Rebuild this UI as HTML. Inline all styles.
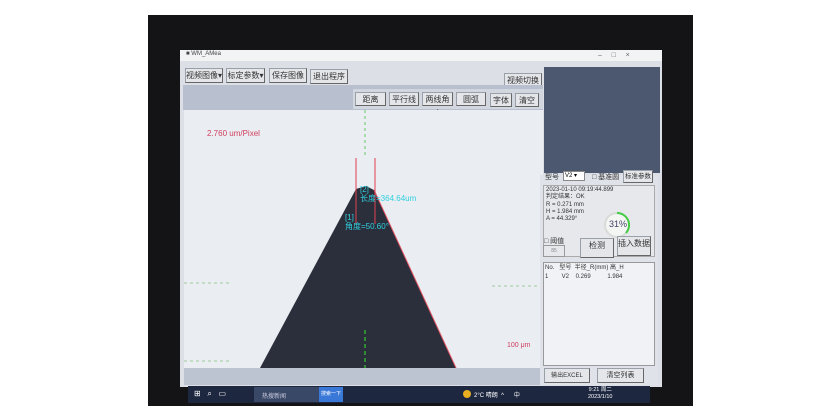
<!DOCTYPE html>
<html><head><meta charset="utf-8"><style>
*{margin:0;padding:0;box-sizing:border-box}
body{width:840px;height:420px;background:#fff;position:relative;overflow:hidden;font-family:"Liberation Sans","Noto Sans CJK SC",sans-serif}
.a{position:absolute}
.btn{position:absolute;background:#e4e6ea;border:1px solid #9aa0a8;border-right-color:#666;border-bottom-color:#666;font-size:8px;color:#333;text-align:center;line-height:14px}
.t{position:absolute;font-size:6px;color:#333;white-space:nowrap}
</style></head><body>
<div class="a" style="left:148px;top:15px;width:545px;height:391px;background:#141416"></div>
<div class="a" style="left:180px;top:50px;width:482px;height:337px;background:#dcdfe6"></div>
<div class="a" style="left:180px;top:50px;width:482px;height:11px;background:#f2f3f5"></div>
<div class="t" style="left:186px;top:51px;color:#444">■ WM_AMea</div>
<div class="t" style="left:598px;top:52px;font-size:7px;color:#666">–&nbsp;&nbsp;&nbsp;&nbsp;&nbsp;□&nbsp;&nbsp;&nbsp;&nbsp;&nbsp;×</div>
<div class="btn" style="left:185px;top:68px;width:38px;height:15px">视频图像▾</div>
<div class="btn" style="left:226px;top:68px;width:39px;height:15px">标定参数▾</div>
<div class="btn" style="left:269px;top:68px;width:38px;height:15px">保存图像</div>
<div class="btn" style="left:310px;top:69px;width:38px;height:15px">退出程序</div>
<div class="btn" style="left:504px;top:73px;width:38px;height:15px">视频切换</div>
<div class="a" style="left:183px;top:85px;width:360px;height:25px;background:#b8c0cf"></div>
<div class="a" style="left:353px;top:89px;width:190px;height:20px;background:#d2d6de"></div>
<div class="btn" style="left:355px;top:92px;width:31px;height:14px">距离</div>
<div class="btn" style="left:389px;top:92px;width:30px;height:14px">平行线</div>
<div class="btn" style="left:422px;top:92px;width:31px;height:14px">两线角度</div>
<div class="btn" style="left:456px;top:92px;width:30px;height:14px">圆弧</div>
<div class="btn" style="left:490px;top:93px;width:22px;height:14px">字体</div>
<div class="btn" style="left:515px;top:93px;width:24px;height:14px">清空</div>
<div class="a" style="left:184px;top:110px;width:359px;height:258px;background:#eaedf1"></div>
<svg class="a" style="left:184px;top:110px" width="359" height="258">
<polygon points="76,258 172,79 182,76 190,80 272,258" fill="#2a2f3b"/>
<line x1="190" y1="80" x2="272" y2="258" stroke="#e05060" stroke-width="1"/>
<line x1="172" y1="48" x2="172" y2="114" stroke="#e04050"/>
<line x1="191" y1="48" x2="191" y2="114" stroke="#e04050"/>
<line x1="181" y1="0" x2="181" y2="45" stroke="#6c6" stroke-dasharray="3,3"/>
<line x1="181" y1="220" x2="181" y2="258" stroke="#3a3" stroke-width="1.5" stroke-dasharray="4,3"/>
<line x1="0" y1="173" x2="45" y2="173" stroke="#9c9" stroke-dasharray="3,3"/>
<line x1="0" y1="251" x2="45" y2="251" stroke="#9c9" stroke-dasharray="3,3"/>
<line x1="308" y1="176" x2="355" y2="176" stroke="#9c9" stroke-dasharray="3,3"/>
</svg>
<div class="t" style="left:207px;top:129px;font-size:8px;color:#d04060">2.760 um/Pixel</div>
<div class="t" style="left:360px;top:185px;font-size:8px;color:#30d0e0;line-height:9px">[2]<br>长度=364.64um</div>
<div class="t" style="left:345px;top:213px;font-size:8px;color:#30d0e0;line-height:9px">[1]<br>角度=50.60°</div>
<div class="t" style="left:507px;top:342px;font-size:7px;color:#d04060">100 μm</div>
<div class="a" style="left:184px;top:368px;width:356px;height:17px;background:#bcc4d2"></div>
<div class="a" style="left:544px;top:67px;width:116px;height:106px;background:#4c5870"></div>
<div class="a" style="left:540px;top:175px;width:118px;height:210px;background:#dfe2e8"></div>
<div class="t" style="left:545px;top:172px;font-size:7px">型号</div>
<div class="a" style="left:563px;top:171px;width:22px;height:10px;background:#fff;border:1px solid #888;font-size:6px;padding-left:1px">V2 ▾</div>
<div class="t" style="left:592px;top:172px;font-size:7px">□ 基准圆</div>
<div class="btn" style="left:623px;top:170px;width:30px;height:13px;font-size:6.5px;line-height:11px">标准参数</div>
<div class="a" style="left:543px;top:185px;width:112px;height:72px;border:1px solid #aaa;background:#e6e8ec"></div>
<div class="t" style="left:546px;top:187px;line-height:7.3px">2023-01-10 09:19:44.899<br>判定结果：OK<br>R = 0.271 mm<br>H = 1.984 mm<br>A = 44.329°</div>
<svg class="a" style="left:602px;top:210px" width="30" height="30"><circle cx="15" cy="15" r="12" fill="#f4f6f4" stroke="#d8dcd8" stroke-width="2"/><path d="M15 3 A12 12 0 0 1 24 23" fill="none" stroke="#4c4" stroke-width="2"/><text x="7" y="17" font-size="9" fill="#446" font-family="Liberation Sans">31%</text></svg>
<div class="t" style="left:544px;top:236px;font-size:7px">□ 阈值</div>
<div class="a" style="left:543px;top:245px;width:22px;height:12px;border:1px solid #999;font-size:5px;color:#888;text-align:center;line-height:10px">85</div>
<div class="btn" style="left:580px;top:238px;width:34px;height:20px">检测</div>
<div class="btn" style="left:617px;top:236px;width:34px;height:20px">插入数据</div>
<div class="a" style="left:543px;top:262px;width:112px;height:104px;background:#f0f2f5;border:1px solid #999"></div>
<div class="t" style="left:545px;top:264px;line-height:9px">No.&nbsp;&nbsp;&nbsp;型号&nbsp;&nbsp;半径_R(mm)&nbsp;高_H<br>1&nbsp;&nbsp;&nbsp;&nbsp;&nbsp;&nbsp;&nbsp;&nbsp;V2&nbsp;&nbsp;&nbsp;&nbsp;0.269&nbsp;&nbsp;&nbsp;&nbsp;&nbsp;&nbsp;&nbsp;&nbsp;&nbsp;&nbsp;1.984</div>
<div class="btn" style="left:544px;top:368px;width:46px;height:15px;font-size:6px">输出EXCEL</div>
<div class="btn" style="left:597px;top:368px;width:47px;height:15px;font-size:7px">清空列表</div>
<div class="a" style="left:188px;top:386px;width:462px;height:17px;background:#1d2740"></div>
<div class="a" style="left:254px;top:387px;width:65px;height:15px;background:#3a4868"></div>
<div class="a" style="left:319px;top:387px;width:24px;height:15px;background:#3a78d8;font-size:5px;color:#fff;line-height:15px;text-align:center">搜索一下</div>
<div class="t" style="left:194px;top:389px;color:#fff;font-size:8px">⊞&nbsp;&nbsp;&nbsp;⌕&nbsp;&nbsp;&nbsp;▭</div>
<div class="t" style="left:262px;top:391px;color:#ccd">热搜新闻</div>
<div class="a" style="left:463px;top:390px;width:8px;height:8px;border-radius:50%;background:#e8b020"></div>
<div class="t" style="left:474px;top:390px;color:#fff">2°C 晴朗&nbsp;&nbsp;^&nbsp;&nbsp;&nbsp;&nbsp;&nbsp;&nbsp;中</div>
<div class="t" style="left:588px;top:387px;color:#fff;font-size:5.5px;line-height:7px;text-align:center">9:21 周二<br>2023/1/10</div>
</body></html>
